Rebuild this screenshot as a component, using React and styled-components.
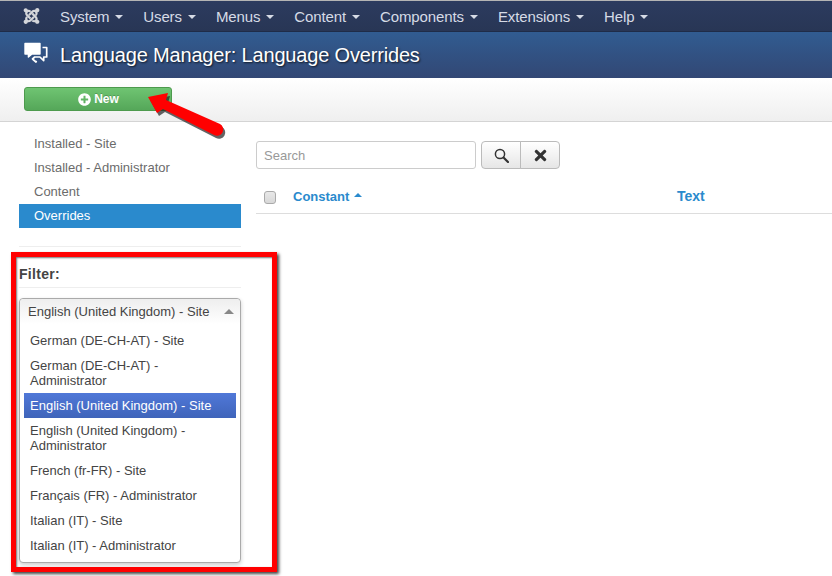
import React from "react";
import styled, { createGlobalStyle } from "styled-components";
import { FaJoomla, FaPlusCircle, FaTimes } from "react-icons/fa";

const GlobalStyle = createGlobalStyle`
  html, body {
    margin: 0;
    padding: 0;
    background: #fff;
    font-family: "Liberation Sans", Arial, sans-serif;
    overflow: hidden;
  }
  * { box-sizing: border-box; }
`;

const menus = ["System", "Users", "Menus", "Content", "Components", "Extensions", "Help"];
const sideLinks = ["Installed - Site", "Installed - Administrator", "Content", "Overrides"];
const languages = [
  "German (DE-CH-AT) - Site",
  "German (DE-CH-AT) - Administrator",
  "English (United Kingdom) - Site",
  "English (United Kingdom) - Administrator",
  "French (fr-FR) - Site",
  "Français (FR) - Administrator",
  "Italian (IT) - Site",
  "Italian (IT) - Administrator",
];
const arrowShape = "M2 5 L22 1 L20 8 L74 32 A5.6 5.6 0 0 1 68 43 L17 17 L11 21 Z";

const App = () => {
  return (
    <Page>
      <GlobalStyle />
      <NavBar>
        <Logo><FaJoomla /></Logo>
        {menus.map((m) => (
          <NavItem key={m}>
            {m}
            <NavCaret />
          </NavItem>
        ))}
      </NavBar>
      <TitleBar>
        <TitleIcon viewBox="0 0 24 22">
          <path d="M1 1.5h15v10.5H8l-3.6 3v-3H1z" fill="#fff" stroke="#fff" strokeWidth="1.4" strokeLinejoin="round" />
          <path d="M18.5 5.5h4.2v9.5h-3v3.6l-3.8-3.6h-5.2l-2.2 2 3.5 3 .4-1.2" fill="none" stroke="#fff" strokeWidth="1.7" strokeLinejoin="round" />
        </TitleIcon>
        <Title>Language Manager: Language Overrides</Title>
      </TitleBar>
      <Toolbar>
        <NewButton>
          <FaPlusCircle />
          New
        </NewButton>
      </Toolbar>
      <Columns>
        <Sidebar>
          <SideNav>
            {sideLinks.map((l) => (
              <SideLink key={l} active={l === "Overrides"}>{l}</SideLink>
            ))}
          </SideNav>
          <SideDivider />
          <FilterTitle>Filter:</FilterTitle>
          <ChosenSelect>
            <ChosenHead>
              English (United Kingdom) - Site
              <UpCaret />
            </ChosenHead>
            <ChosenList>
              {languages.map((l, i) => (
                <ChosenOption key={l} active={i === 2}>{l}</ChosenOption>
              ))}
            </ChosenList>
          </ChosenSelect>
        </Sidebar>
        <Main>
          <SearchRow>
            <SearchInput placeholder="Search" />
            <ButtonGroup>
              <IconButton>
                <svg width="15" height="15" viewBox="0 0 15 15">
                  <circle cx="6" cy="6" r="4.6" fill="none" stroke="#333" strokeWidth="1.5" />
                  <path d="M9.5 9.5 L14 14" stroke="#333" strokeWidth="2.2" strokeLinecap="round" />
                </svg>
              </IconButton>
              <IconButton><FaTimes /></IconButton>
            </ButtonGroup>
          </SearchRow>
          <TableHead>
            <Check />
            <ConstantHead>
              Constant
              <SortCaret />
            </ConstantHead>
            <TextHead>Text</TextHead>
          </TableHead>
        </Main>
      </Columns>
      <RedBox />
      <Arrow viewBox="0 0 84 50">
        <path d={arrowShape} fill="#222" opacity="0.7" transform="translate(2 3)" />
        <path d={arrowShape} fill="#f00" />
      </Arrow>
    </Page>
  );
};

const Page = styled.div`
  position: relative;
  width: 832px;
  height: 576px;
  overflow: hidden;
  background: #fff;
`;

const NavBar = styled.div`
  height: 32px;
  display: flex;
  align-items: center;
  gap: 20px;
  padding-left: 23px;
  border-top: 1px solid #b4b4b4;
  border-bottom: 1px solid #1f2c48;
  background: linear-gradient(#2c3b5f, #283655);
`;

const Logo = styled.span`
  display: flex;
  width: 17px;
  font-size: 18px;
  color: #d4d6da;
`;

const NavItem = styled.span`
  display: flex;
  align-items: center;
  font-size: 15px;
  letter-spacing: -0.12px;
  color: #d6dbe6;
`;

const NavCaret = styled.i`
  width: 0;
  height: 0;
  margin: 2px 0 0 6px;
  border-left: 4px solid transparent;
  border-right: 4px solid transparent;
  border-top: 4px solid #d6dbe6;
`;

const TitleBar = styled.div`
  height: 46px;
  display: flex;
  align-items: center;
  padding-left: 24px;
  gap: 12px;
  background: linear-gradient(#315c91, #324774);
`;

const TitleIcon = styled.svg`
  width: 24px;
  height: 22px;
  margin-top: -4px;
`;

const Title = styled.h1`
  margin: 0;
  font-size: 20px;
  font-weight: 400;
  letter-spacing: -0.17px;
  color: #fff;
  text-shadow: 1px 1px 2px rgba(0, 0, 0, 0.7);
`;

const Toolbar = styled.div`
  height: 44px;
  padding: 9px 0 0 24px;
  border-bottom: 1px solid #d4d4d4;
  background: linear-gradient(#fff, #efefef);
`;

const NewButton = styled.button`
  width: 148px;
  height: 24px;
  display: flex;
  align-items: center;
  justify-content: center;
  gap: 3px;
  padding: 0 0 0 1px;
  border: 1px solid #4d9a4d;
  border-radius: 3px;
  background: linear-gradient(#6fc472, #55a759);
  color: #fff;
  font-family: inherit;
  font-size: 12px;
  font-weight: 700;
  text-shadow: 0 -1px 0 rgba(0, 0, 0, 0.2);

  svg {
    font-size: 13px;
  }
`;

const Columns = styled.div`
  display: flex;
`;

const Sidebar = styled.div`
  width: 222px;
  margin-left: 19px;
  padding-top: 10px;
`;

const SideNav = styled.div`
  display: flex;
  flex-direction: column;
`;

const SideLink = styled.a`
  height: 24px;
  line-height: 24px;
  padding-left: 15px;
  font-size: 13px;
  color: ${(props) => (props.active ? "#fff" : "#6b6b6b")};
  background: ${(props) => (props.active ? "#2a8acd" : "transparent")};
`;

const SideDivider = styled.div`
  height: 1px;
  margin-top: 18px;
  background: #eeeeee;
`;

const FilterTitle = styled.div`
  height: 41px;
  padding-top: 19px;
  border-bottom: 1px solid #eeeeee;
  font-size: 14px;
  line-height: 16px;
  font-weight: 700;
  letter-spacing: 0.3px;
  color: #444;
`;

const ChosenSelect = styled.div`
  margin-top: 10px;
  height: 265px;
  border: 1px solid #aaa;
  border-radius: 4px;
  background: #fff;
  box-shadow: 0 2px 4px rgba(0, 0, 0, 0.2);
`;

const ChosenHead = styled.div`
  height: 25px;
  display: flex;
  align-items: center;
  justify-content: space-between;
  padding: 0 6px 0 8px;
  font-size: 13px;
  color: #444;
  border-radius: 4px 4px 0 0;
  background: linear-gradient(#eee, #fff);
`;

const UpCaret = styled.i`
  width: 0;
  height: 0;
  border-left: 5px solid transparent;
  border-right: 5px solid transparent;
  border-bottom: 5px solid #888;
`;

const ChosenList = styled.div`
  margin: 4px 4px 0;
`;

const ChosenOption = styled.div`
  padding: 5px 6px;
  font-size: 13px;
  line-height: 15px;
  color: ${(props) => (props.active ? "#fff" : "#444")};
  background: ${(props) => (props.active ? "linear-gradient(#5078d8, #3f64ba)" : "transparent")};
`;

const Main = styled.div`
  flex: 1;
  margin-left: 15px;
  padding-top: 19px;
`;

const SearchRow = styled.div`
  display: flex;
  gap: 5px;
`;

const SearchInput = styled.input`
  width: 220px;
  height: 28px;
  padding: 0 7px;
  border: 1px solid #ccc;
  border-radius: 3px;
  font-family: inherit;
  font-size: 13px;
  color: #444;

  &::placeholder {
    color: #999;
  }
`;

const ButtonGroup = styled.div`
  display: flex;
`;

const IconButton = styled.button`
  width: 40px;
  height: 28px;
  display: flex;
  align-items: center;
  justify-content: center;
  padding: 0;
  border: 1px solid #bbb;
  background: linear-gradient(#fff, #e6e6e6);
  color: #333;
  font-size: 17px;

  &:first-child {
    border-radius: 4px 0 0 4px;
  }
  &:last-child {
    margin-left: -1px;
    border-radius: 0 4px 4px 0;
  }
`;

const TableHead = styled.div`
  height: 37px;
  margin-top: 8px;
  padding: 2px 0 0 8px;
  display: flex;
  align-items: center;
  border-bottom: 1px solid #ddd;
`;

const Check = styled.span`
  width: 12px;
  height: 13px;
  margin-top: 2px;
  border: 1px solid #aaa;
  border-radius: 3px;
  background: linear-gradient(#e8e8e8, #d8d8d8);
`;

const ConstantHead = styled.span`
  width: 384px;
  display: flex;
  align-items: center;
  margin-left: 17px;
  font-size: 13px;
  font-weight: 700;
  color: #2a8acd;
`;

const SortCaret = styled.i`
  width: 0;
  height: 0;
  margin: 0 0 3px 5px;
  border-left: 4px solid transparent;
  border-right: 4px solid transparent;
  border-bottom: 4px solid #2a8acd;
`;

const TextHead = styled.span`
  font-size: 14px;
  font-weight: 700;
  color: #2a8acd;
`;

const RedBox = styled.div`
  position: absolute;
  left: 11px;
  top: 252px;
  width: 266px;
  height: 320px;
  border: 5px solid #f00;
  box-shadow: 2px 2px 3px rgba(0, 0, 0, 0.75), inset 1px 1px 2px rgba(0, 0, 0, 0.55);
`;

const Arrow = styled.svg`
  position: absolute;
  left: 146px;
  top: 92px;
  width: 84px;
  height: 50px;
`;

export default App;
